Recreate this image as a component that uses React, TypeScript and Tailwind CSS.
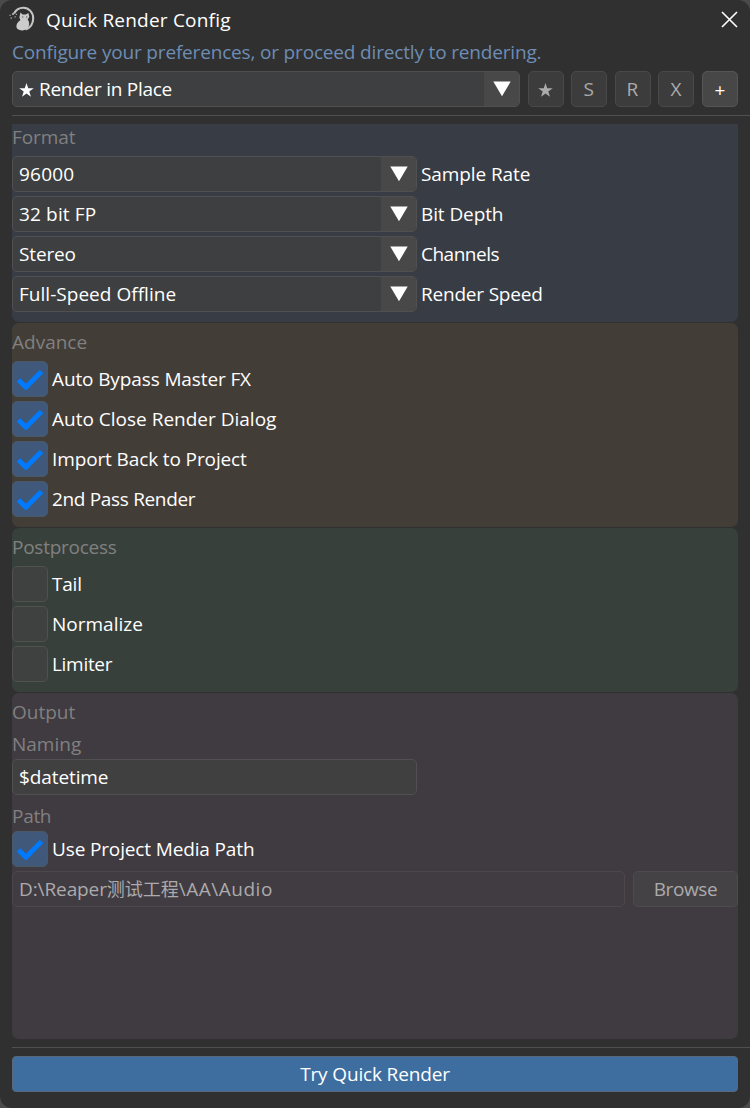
import { useState } from 'react'
import clsx from 'clsx'

const formatFields = [
  { label: 'Sample Rate', value: '96000', className: 'tracking-[-0.1px]', valueClass: 'tracking-[0.2px]' },
  { label: 'Bit Depth', value: '32 bit FP', className: 'tracking-[-0.1px]', valueClass: 'tracking-[0.15px]' },
  { label: 'Channels', value: 'Stereo', className: 'tracking-[-0.5px]', valueClass: 'tracking-[-0.15px]' },
  { label: 'Render Speed', value: 'Full-Speed Offline', className: 'tracking-[-0.2px]', valueClass: 'tracking-[0.03px]' },
]

const advanceOptions = [
  { label: 'Auto Bypass Master FX', className: 'tracking-[-0.12px]' },
  { label: 'Auto Close Render Dialog', className: '' },
  { label: 'Import Back to Project', className: 'tracking-[-0.12px]' },
  { label: '2nd Pass Render', className: 'tracking-[-0.33px]' },
]

const postOptions = [
  { label: 'Tail', className: 'tracking-[-0.2px]' },
  { label: 'Normalize', className: '' },
  { label: 'Limiter', className: 'tracking-[-0.3px]' },
]

function Logo() {
  return (
    <svg width="28" height="28" viewBox="0 0 28 28" fill="none">
      <path d="M5 9.5C7 5.8 10.5 3.8 14.3 3.8C20 3.8 24.2 8.5 24.2 14.2C24.2 19.5 21.5 23.5 16.5 25.6" stroke="#c4c4c4" strokeWidth="2.1" />
      <path
        d="M11.4 8.6L13.6 10.4H16.8L19.4 9L20.3 13L18.6 15.6C20.8 18 20.6 22 18.4 24.6C16 27 10 27 8 24.6C6.6 21.5 8 18.4 11.4 16.2L10.4 13.4Z"
        fill="#cccccc"
      />
      <path d="M13 13h1.3M17 13h1.3" stroke="#555" strokeWidth="1" />
      <path d="M3 9h2v2H3zM0.5 10.8h1.2v1.2H.5zM1.5 13.4h1.6v1.4h-1.6zM5.5 12.2h1.3v1.3H5.5zM6.8 9.8h1.2v1.2H6.8z" fill="#a0a0a0" />
    </svg>
  )
}

function Star({ className }: { className?: string }) {
  return (
    <svg width="15" height="14" viewBox="0 0 14 13.5" className={className} fill="currentColor">
      <path d="M7 0L8.7 5H14L9.7 8.2L11.3 13.3L7 10.2L2.7 13.3L4.3 8.2L0 5H5.3Z" />
    </svg>
  )
}

function Arrow() {
  return (
    <svg width="18" height="16" viewBox="0 0 18 16" fill="#fff">
      <path d="M0.3 0.5H17.7L9 15.3Z" />
    </svg>
  )
}

function Select({ value, star, className }: { value: string; star?: boolean; className: string }) {
  return (
    <button className={clsx('flex h-9 items-center overflow-hidden rounded-[5px] border border-[#505051] bg-[#3e3f40] text-left', className)}>
      <span className="flex flex-1 items-center gap-[5px] pl-1.5">
        {star && <Star className="mt-0.5" />}
        {value}
      </span>
      <span className="flex h-full w-[35px] items-center justify-center bg-[#484849]">
        <Arrow />
      </span>
    </button>
  )
}

function Checkbox({ label, initial, className }: { label: string; initial: boolean; className?: string }) {
  const [checked, setChecked] = useState(initial)
  return (
    <button className={clsx('flex h-9 items-center gap-1', className)} onClick={() => setChecked(!checked)}>
      <span
        className={clsx(
          'flex size-9 items-center justify-center rounded-[5px] border',
          checked ? 'border-[#4b5866] bg-[#405879]' : 'border-[#505151] bg-[#3f4040]',
        )}
      >
        {checked && (
          <svg width="26" height="20" viewBox="0 0 26 20" fill="none" className="mt-0.5">
            <path d="M1.5 10L9 17.2L24.5 1.5" stroke="#007bff" strokeWidth="4.8" />
          </svg>
        )}
      </span>
      {label}
    </button>
  )
}

function Section({ title, className, children }: { title: string; className: string; children: React.ReactNode }) {
  return (
    <section className={className}>
      <h2 className="h-[27px] text-[#808080]">{title}</h2>
      {children}
    </section>
  )
}

export default function App() {
  return (
    <div className="h-[1108px] w-[750px] bg-[#4a4a4a] font-['Open_Sans','Noto_Sans_CJK_SC',sans-serif] text-[19px] leading-[27px] whitespace-nowrap text-white">
      <div className="flex h-full flex-col rounded-[12px] bg-[#303030] pl-3">
        <header className="flex h-[39px] shrink-0 items-center">
          <div className="-ml-[3px] -mt-[3px] mr-[9px]">
            <Logo />
          </div>
          <h1 className="pt-px tracking-[0.2px]">Quick Render Config</h1>
          <button className="ml-auto mr-3">
            <svg width="17" height="17" viewBox="0 0 17 17" stroke="#fff" strokeWidth="1.6">
              <path d="M1 1L16 16M16 1L1 16" />
            </svg>
          </button>
        </header>
        <p className="h-8 tracking-[-0.17px] text-[#6d8db5]">Configure your preferences, or proceed directly to rendering.</p>
        <div className="mr-3 flex justify-between">
          <Select value="Render in Place" star className="w-[508px] tracking-[-0.27px]" />
          {['★', 'S', 'R', 'X'].map((key) => (
            <button key={key} className="flex size-9 items-center justify-center rounded-[5px] border border-[#494949] bg-[#3c3c3c] pr-px text-[#ababab]">
              {key === '★' ? <Star className="mt-0.5" /> : key}
            </button>
          ))}
          <button className="size-9 rounded-[5px] border border-[#555] bg-[#474747] pt-0.5">+</button>
        </div>
        <hr className="mt-2 border-[#505050]" />

        <main className="mr-3 mt-2 flex flex-col gap-px">
          <Section title="Format" className="h-[198px] rounded-b-[7px] bg-[#383c44] [&>h2]:tracking-[-0.1px]">
            <div className="mt-[5px] flex flex-col gap-1">
              {formatFields.map((field) => (
                <label key={field.label} className={clsx('flex items-center gap-1', field.className)}>
                  <Select value={field.value} className={clsx('w-[405px]', field.valueClass)} />
                  {field.label}
                </label>
              ))}
            </div>
          </Section>
          <Section title="Advance" className="h-[204px] rounded-[7px] bg-[#433d37] pt-[6px]">
            <div className="mt-[5px] flex flex-col gap-1">
              {advanceOptions.map((option) => (
                <Checkbox key={option.label} {...option} initial />
              ))}
            </div>
          </Section>
          <Section title="Postprocess" className="h-[164px] rounded-[7px] bg-[#38403b] pt-[6px] [&>h2]:tracking-[-0.25px]">
            <div className="mt-[5px] flex flex-col gap-1">
              {postOptions.map((option) => (
                <Checkbox key={option.label} {...option} initial={false} />
              ))}
            </div>
          </Section>
          <Section title="Output" className="h-[346px] rounded-[7px] bg-[#403a41] pt-[6px]">
            <h3 className="mt-[5px] h-7 text-[#808080]">Naming</h3>
            <div className="flex h-9 w-[405px] items-center rounded-[5px] border border-[#505051] bg-[#404041] pl-1.5 tracking-[-0.1px]">$datetime</div>
            <h3 className="mt-2 h-7 tracking-[-0.3px] text-[#808080]">Path</h3>
            <Checkbox label="Use Project Media Path" initial className="tracking-[-0.14px]" />
            <div className="mt-1 flex gap-2 text-[#acaaac]">
              <div className="flex h-9 flex-1 items-center rounded-[5px] border border-[#4b474b] bg-[#413c41] pl-1.5">
                <span className="tracking-[-0.1px]">D:\Reaper</span>
                <span className="text-[18px]">测试工程</span>
                <span className="tracking-[0.5px]">\AA\Audio</span>
              </div>
              <button className="h-9 w-[105px] rounded-[5px] border border-[#4d4b4d] bg-[#444244] tracking-[-0.4px]">Browse</button>
            </div>
          </Section>
        </main>

        <hr className="mt-2 border-[#505050]" />
        <button className="mr-3 mt-2 h-9 rounded-[4px] border border-[#57697a] bg-[#3d6e9f] tracking-[-0.15px]">Try Quick Render</button>
      </div>
    </div>
  )
}
